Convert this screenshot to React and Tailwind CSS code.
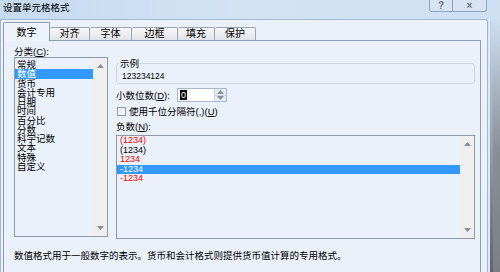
const categories = ["常规", "数值", "货币", "会计专用", "日期", "时间", "百分比", "分数", "科学记数", "文本", "特殊", "自定义"];

const negatives = [
  { text: "(1234)", color: "text-[#ff0000]" },
  { text: "(1234)", color: "text-black" },
  { text: "1234", color: "text-[#ff0000]" },
  { text: "-1234", color: "text-white", selected: true },
  { text: "-1234", color: "text-[#ff0000]" },
];

const tabs = [
  { label: "数字", w: "w-[47px]", active: true },
  { label: "对齐", w: "w-[40px]" },
  { label: "字体", w: "w-[42px]" },
  { label: "边框", w: "w-[46px]" },
  { label: "填充", w: "w-[37px]" },
  { label: "保护", w: "w-[41px]" },
];

function Arrow({ down }) {
  return (
    <svg width="7" height="4" viewBox="0 0 7 4">
      <path d={down ? "M0 0H7L3.5 4z" : "M3.5 0L7 4H0z"} fill="#8a8f96" />
    </svg>
  );
}

function ScrollBar() {
  return (
    <div className="w-[14px] h-full bg-[#efefef] flex flex-col justify-between items-center py-[6px]">
      <Arrow />
      <Arrow down />
    </div>
  );
}

function Key({ k }) {
  // mnemonic letter like (C)
  return (
    <span>
      (<span className="underline">{k}</span>)
    </span>
  );
}

export default function App() {
  return (
    <div className="w-[500px] h-[272px] overflow-hidden flex flex-col text-black bg-gradient-to-r from-[#c6daf0] via-[#d3e3f4] to-[#cfe0f3] font-['Liberation_Sans','Noto_Sans_CJK_SC',sans-serif]">
      {/* title bar */}
      <div className="h-[19px] shrink-0 flex items-start">
        <span className="ml-[3px] mt-[2px] text-[9.5px] leading-[11px]">设置单元格格式</span>
        <div className="ml-auto mr-[13px] flex h-[12px] border border-t-0 border-[#8ea3bd] rounded-b-[3px] bg-[#d6e4f3] text-[#6f7680] text-[10px] leading-[11px] font-bold">
          <div className="w-[22px] flex justify-center">?</div>
          <div className="w-[34px] flex justify-center border-l border-[#8ea3bd]">×</div>
        </div>
      </div>

      <div className="flex flex-1">
        {/* dialog body */}
        <div className="w-[488px] border-l border-t border-r border-[#a3b7cf] rounded-tr-[3px] bg-[#eaf1fa] pl-[2px] flex flex-col">
          {/* tabs */}
          <div className="h-[20px] flex items-end shrink-0">
            {tabs.map((t) =>
              t.active ? (
                <div
                  key={t.label}
                  className={`${t.w} h-[19px] -mb-px relative z-10 border border-b-0 border-[#8e9cae] rounded-t-[2px] bg-[#edf3fb] text-[10px] leading-[12px] flex justify-center pt-[4px]`}
                >
                  {t.label}
                </div>
              ) : (
                <div
                  key={t.label}
                  className={`${t.w} h-[13px] border border-l-0 border-b-0 border-[#9aa5b3] rounded-t-[2px] bg-gradient-to-b from-[#f7f7f8] to-[#e0e3e8] text-[10px] leading-[12px] flex justify-center items-center`}
                >
                  {t.label}
                </div>
              )
            )}
          </div>

          {/* panel */}
          <div className="w-[478px] h-[240px] border border-[#8e9cae] bg-[#eaf1fa] shrink-0">
            <div className="flex pl-[10px] gap-[8px]">
              {/* category */}
              <div className="w-[94px] pt-[6px] flex flex-col">
                <div className="h-[10px] text-[9.5px] leading-[10px]">
                  分类<Key k="C" />:
                </div>
                <div className="h-[180px] border border-[#8d99a8] flex">
                  <div className="flex-1 pt-[2px]">
                    {categories.map((c, i) => (
                      <div
                        key={c}
                        className={`h-[9.27px] leading-[9.27px] text-[9.5px] pl-[2px] whitespace-nowrap ${
                          i === 1 ? "bg-[#3399ff] text-white" : ""
                        }`}
                      >
                        {c}
                      </div>
                    ))}
                  </div>
                  <ScrollBar />
                </div>
              </div>

              {/* right side */}
              <div className="w-[359px] flex flex-col">
                {/* sample group */}
                <div className="relative mt-[22px] h-[21px] border border-[#cfd9e3] rounded-[3px] pt-[7px] pl-[5px]">
                  <span className="absolute -top-[6px] left-[2px] px-[1px] bg-[#eaf1fa] text-[9.5px] leading-[11px]">示例</span>
                  <div className="text-[8.5px] leading-[10px]">123234124</div>
                </div>

                {/* decimals */}
                <div className="mt-[4px] h-[14px] flex items-center">
                  <div className="w-[61px] text-[9.5px] leading-[10px] pt-[2px] whitespace-nowrap">
                    小数位数<Key k="D" />:
                  </div>
                  <div className="w-[50px] h-[14px] border border-[#a8b8ca] bg-white flex">
                    <div className="flex-1 flex items-center pl-[2px]">
                      <span className="bg-black text-white text-[9px] leading-[10px] px-[1px]">0</span>
                    </div>
                    <div className="w-[12px] flex flex-col border-l border-[#c9d4e0] bg-[#e4edf8]">
                      <div className="flex-1 flex items-center justify-center border-b border-[#c9d4e0]">
                        <Arrow />
                      </div>
                      <div className="flex-1 flex items-center justify-center">
                        <Arrow down />
                      </div>
                    </div>
                  </div>
                </div>

                {/* thousands separator */}
                <div className="mt-[4px] h-[11px] flex items-center">
                  <div className="ml-[1px] w-[9px] h-[9px] border border-[#8f9aa7] bg-gradient-to-br from-[#e6e9ee] to-white" />
                  <span className="ml-[3px] text-[9.5px] leading-[10px] whitespace-nowrap">
                    使用千位分隔符(,)<Key k="U" />
                  </span>
                </div>

                {/* negative numbers */}
                <div className="mt-[5px] h-[10px] text-[9.5px] leading-[10px]">
                  负数<Key k="N" />:
                </div>
                <div className="mt-[3px] h-[104px] border border-[#8d99a8] flex">
                  <div className="flex-1">
                    {negatives.map((n, i) => (
                      <div
                        key={i}
                        className={`h-[9.5px] leading-[9.5px] text-[9px] pl-[3px] ${n.color} ${
                          n.selected ? "bg-[#3399ff]" : ""
                        }`}
                      >
                        {n.text}
                      </div>
                    ))}
                  </div>
                  <ScrollBar />
                </div>
              </div>
            </div>

            <div className="mt-[12px] pl-[10px] text-[9.5px] leading-[10px] whitespace-nowrap">
              数值格式用于一般数字的表示。货币和会计格式则提供货币值计算的专用格式。
            </div>
          </div>
        </div>

        {/* window edge */}
        <div className="w-[12px] flex">
          <div className="w-[2px] bg-[#dce8f5]" />
          <div className="w-[3px] bg-gradient-to-b from-[#c9dcf0] to-[#5d6269]" />
          <div className="flex-1 bg-gradient-to-b from-[#cfe0f2] via-[#8a8f96] to-[#7b7f85]" />
        </div>
      </div>
    </div>
  );
}
